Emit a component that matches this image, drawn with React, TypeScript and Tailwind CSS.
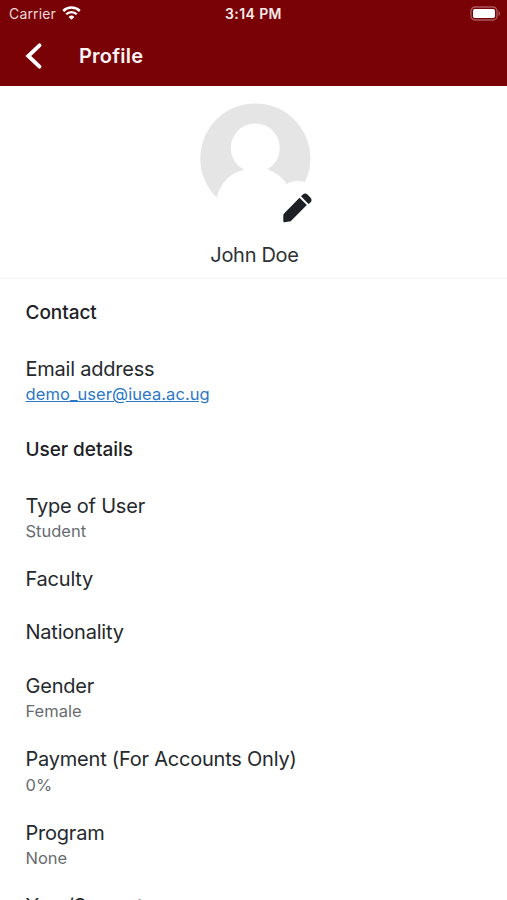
interface ProfileFieldProps {
  label: string
  value?: string
  isLink?: boolean
}

const userDetails: ProfileFieldProps[] = [
  { label: "Type of User", value: "Student" },
  { label: "Faculty" },
  { label: "Nationality" },
  { label: "Gender", value: "Female" },
  { label: "Payment (For Accounts Only)", value: "0%" },
  { label: "Program", value: "None" },
  { label: "Year/Semester" },
]

const StatusBar = () => {
  return (
    <div className="flex h-[27px] items-center justify-between pr-[6px] pl-[9px]">
      <div className="flex w-[90px] items-center gap-[6px]">
        <span className="text-[14px] tracking-[0.15px] text-[#efd9da]">
          Carrier
        </span>
        <svg
          className="-mt-[2px]"
          width="19"
          height="14"
          viewBox="0 0 19 14"
          fill="none"
        >
          <path
            d="M1.2 5a11.8 11.8 0 0 1 16.6 0"
            stroke="#fff"
            strokeWidth="2.5"
          />
          <path
            d="M4.2 8.3a7.5 7.5 0 0 1 10.6 0"
            stroke="#fff"
            strokeWidth="2.3"
          />
          <path d="M9.5 13.8 6.6 10.9a4.2 4.2 0 0 1 5.8 0z" fill="#fff" />
        </svg>
      </div>
      <span className="-ml-[3px] text-[14px] font-semibold tracking-[0.4px] text-[#fbeaea]">
        3:14 PM
      </span>
      <div className="flex w-[90px] justify-end">
        <svg width="31" height="15" viewBox="0 0 31 15" fill="none">
          <rect
            x="1"
            y="1"
            width="26"
            height="13"
            rx="4"
            stroke="#a85a5d"
            strokeWidth="1.3"
          />
          <rect x="3" y="3" width="22" height="9" rx="1.8" fill="#fff" />
          <path d="M28.5 5c2 .7 2 4.3 0 5z" fill="#a85a5d" />
        </svg>
      </div>
    </div>
  )
}

const Header = () => {
  return (
    <header className="h-[86px] bg-[#790206]">
      <StatusBar />
      <div className="flex h-[57px] items-center pl-[25px]">
        <svg width="18" height="28" viewBox="0 0 18 28" fill="none">
          <path
            d="M14.5 3.3 3.3 14l11.2 10.7"
            stroke="#fff"
            strokeWidth="3.9"
            strokeLinecap="round"
          />
        </svg>
        <h1 className="ml-[36px] text-[20px] font-semibold tracking-[0.2px] text-[#fff5f5]">
          Profile
        </h1>
      </div>
    </header>
  )
}

const Avatar = () => {
  return (
    <div className="flex h-[193px] flex-col items-center border-b border-[#f3f3f3] pt-[17px]">
      <svg width="121" height="124" viewBox="0 0 121 124">
        <circle cx="62.3" cy="55.4" r="55" fill="#e5e5e5" />
        <circle cx="62.3" cy="45" r="24.5" fill="#fff" />
        <path
          d="M23.6 95C27 81 36 70.500 50 67c3-1 3.500-3 3-5h20c-1 2 0 4 3 5 7 2.500 12 6.500 16.500 12l1 36H23z"
          fill="#fff"
        />
        <circle cx="105" cy="104" r="26" fill="#fff" />
        <path
          d="M90.300 118.200V112.400c0-.8.3-1.500.8-2l15.400-15.600 7.300 7.300-15.600 15.600c-.6.600-1.300.9-2.100.9l-4.800.6c-.6 0-1-.4-1-1z"
          fill="#1d2125"
        />
        <path
          d="m108 93.300 1.600-1.600c1.500-1.500 3.600-1.500 5.100 0l2.700 2.700c1.500 1.500 1.500 3.600 0 5.100l-1.900 1.600z"
          fill="#1d2125"
        />
      </svg>
      <p className="mt-[13px] ml-[2px] text-[20px] leading-[30px] tracking-[-0.3px] text-[#2d3135]">
        John Doe
      </p>
    </div>
  )
}

const SectionTitle = ({ title }: { title: string }) => {
  return (
    <h2 className="h-[63.5px] pt-[22px] text-[19px] leading-[24px] font-medium tracking-[-0.05px] text-[#1d2125]">
      {title}
    </h2>
  )
}

const ProfileField = ({ label, value, isLink }: ProfileFieldProps) => {
  return (
    <div className="py-[13.5px]">
      <p className="text-[20px] leading-[26.4px] tracking-[-0.22px] text-[#25292d]">
        {label}
      </p>
      {value && (
        <p className="mt-[4px] -mb-px text-[16.5px] leading-[17px] text-[#686c70]">
          {isLink ? (
            <a
              href={`mailto:${value}`}
              className="tracking-[0.08px] text-[#2b78c5] underline"
            >
              {value}
            </a>
          ) : (
            value
          )}
        </p>
      )}
    </div>
  )
}

const App = () => {
  return (
    <div className="h-[900px] w-[507px] overflow-hidden bg-white font-['Inter','Liberation_Sans',sans-serif]">
      <Header />
      <Avatar />
      <main className="-mt-[0.4px] pr-[26px] pl-[25.5px]">
        <SectionTitle title="Contact" />
        <ProfileField
          label="Email address"
          value="demo_user@iuea.ac.ug"
          isLink
        />
        <SectionTitle title="User details" />
        {userDetails.map((field) => (
          <ProfileField key={field.label} {...field} />
        ))}
      </main>
    </div>
  )
}

export default App
